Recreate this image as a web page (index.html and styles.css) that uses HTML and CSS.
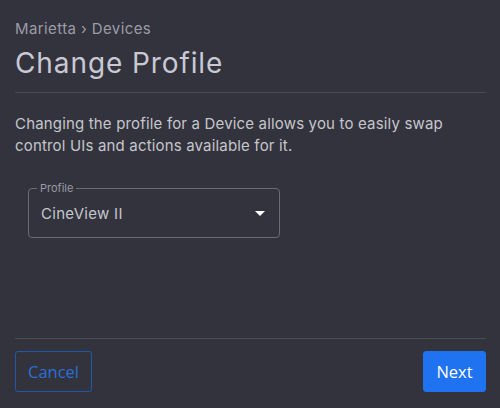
FILE: index.html
```html
<!DOCTYPE html>
<html>
<head>
<meta charset="utf-8">
<link rel="stylesheet" href="styles.css">
</head>
<body>
<div class="page">
  <header class="head">
    <div class="crumbs">Marietta › Devices</div>
    <h1 class="title">Change Profile</h1>
  </header>
  <main class="body">
    <p class="desc">Changing the profile for a Device allows you to easily swap control UIs and actions available for it.</p>
    <fieldset class="field">
      <legend class="legend">Profile</legend>
      <div class="select">
        <span class="value">CineView II</span>
        <svg class="caret" width="10" height="5" viewBox="0 0 10 5"><path d="M0 0h10L5 5z" fill="#ffffff"/></svg>
      </div>
    </fieldset>
  </main>
  <footer class="foot">
    <button class="btn btn-outline">Cancel</button>
    <button class="btn btn-primary">Next</button>
  </footer>
</div>
</body>
</html>
```
FILE: styles.css
```css
html, body {
  margin: 0;
  padding: 0;
  background: #32333c;
}
.page {
  width: 500px;
  height: 408px;
  box-sizing: border-box;
  padding: 0 14px 0 15px;
  display: flex;
  flex-direction: column;
  font-family: Inter, "Noto Sans", sans-serif;
}
.head {
  padding-top: 20px;
  border-bottom: 1px solid #4a4b55;
  padding-bottom: 12px;
}
.crumbs {
  color: #9c9ca8;
  font-size: 15px;
  line-height: 18px;
  letter-spacing: 0.4px;
}
.title {
  margin: 8px 0 0;
  color: #c9c9d5;
  font-size: 28px;
  font-weight: 400;
  line-height: 34px;
  letter-spacing: 0.9px;
}
.body {
  flex: 1;
  border-bottom: 1px solid #4a4b55;
}
.desc {
  margin: 20px 0 0;
  color: #c6c6cd;
  font-size: 15px;
  line-height: 22px;
  letter-spacing: 0.17px;
}
.field {
  margin: 25px 0 0 13px;
  width: 252px;
  box-sizing: border-box;
  border: 1px solid #6a6b74;
  border-radius: 4px;
  padding: 0 14px 0 12px;
  height: 56px;
  position: relative;
}
.legend {
  color: #9a9aa5;
  font-size: 11px;
  padding: 0 3px;
  margin-left: -4px;
  line-height: 12px;
}
.select {
  display: flex;
  align-items: center;
  justify-content: space-between;
  height: 36px;
  margin-top: 1px;
}
.value {
  color: #c6c6cd;
  font-size: 15px;
  letter-spacing: 0.3px;
}
.caret {
  display: block;
}
.foot {
  display: flex;
  justify-content: space-between;
  padding: 12px 0 16px;
}
.btn {
  font-family: "Open Sans", Roboto, sans-serif;
  font-size: 16.5px;
  height: 41px;
  border-radius: 3px;
  padding: 0;
  cursor: pointer;
}
.btn-outline {
  background: transparent;
  border: 1px solid #2357a6;
  color: #2b6fd8;
  width: 77px;
}
.btn-primary {
  background: #1f72f0;
  border: 1px solid #1f72f0;
  color: #ffffff;
  width: 63px;
}
```
